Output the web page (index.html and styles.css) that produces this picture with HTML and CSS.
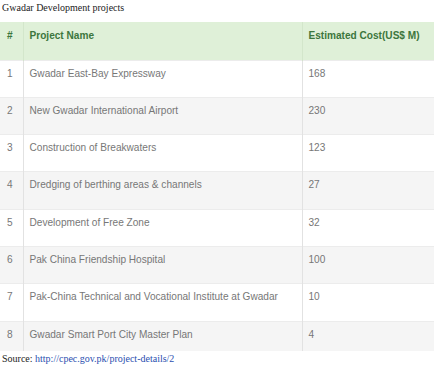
FILE: index.html
```html
<!DOCTYPE html>
<html>
<head>
<meta charset="utf-8">
<link rel="stylesheet" href="styles.css">
</head>
<body>
<p class="caption">Gwadar Development projects</p>
<table class="projects">
  <thead>
    <tr class="head-row">
      <th class="col-num">#</th>
      <th class="col-name">Project Name</th>
      <th class="col-cost">Estimated Cost(US$ M)</th>
    </tr>
  </thead>
  <tbody>
    <tr class="odd"><td>1</td><td>Gwadar East-Bay Expressway</td><td>168</td></tr>
    <tr class="even"><td>2</td><td>New Gwadar International Airport</td><td>230</td></tr>
    <tr class="odd"><td>3</td><td>Construction of Breakwaters</td><td>123</td></tr>
    <tr class="even"><td>4</td><td>Dredging of berthing areas &amp; channels</td><td>27</td></tr>
    <tr class="odd"><td>5</td><td>Development of Free Zone</td><td>32</td></tr>
    <tr class="even"><td>6</td><td>Pak China Friendship Hospital</td><td>100</td></tr>
    <tr class="odd"><td>7</td><td>Pak-China Technical and Vocational Institute at Gwadar</td><td>10</td></tr>
    <tr class="even last"><td>8</td><td>Gwadar Smart Port City Master Plan</td><td>4</td></tr>
  </tbody>
</table>
<p class="source">Source: <a class="src-link" href="#">http://cpec.gov.pk/project-details/2</a></p>
</body>
</html>
```
FILE: styles.css
```css
html, body {
  margin: 0;
  padding: 0;
  background: #ffffff;
}
.caption {
  margin: 0;
  padding: 2px 0 0 2px;
  height: 22px;
  box-sizing: border-box;
  font-family: "Liberation Serif", "Times New Roman", serif;
  font-size: 10px;
  line-height: 11px;
  color: #222;
}
.projects {
  width: 434px;
  border-collapse: collapse;
  table-layout: fixed;
  font-family: "Liberation Sans", Arial, sans-serif;
  font-size: 10.1px;
  line-height: 13px;
  color: #777;
}
.projects th, .projects td {
  box-sizing: border-box;
  text-align: left;
  vertical-align: top;
  padding: 6px 6px 0 6px;
  border-left: 1px solid #e2e2e2;
  border-top: 1px solid #ececec;
  white-space: nowrap;
  overflow: hidden;
}
.col-num { width: 23px; }
.col-cost { width: 132px; }
.projects tr > :first-child {
  border-left: none;
  padding-left: 7px;
}
.head-row {
  height: 38px;
  background: #dff0d8;
}
.projects th {
  color: #3c763d;
  font-weight: bold;
  padding-top: 7px;
  border-top: none;
  border-left-color: #d3e6cb;
}
.projects tbody tr {
  height: 37.3px;
}
.projects tbody tr.last {
  height: 30px;
}
.odd { background: #ffffff; }
.even { background: #f5f5f5; }
.source {
  margin: 0;
  padding: 2px 0 0 2px;
  font-family: "Liberation Serif", "Times New Roman", serif;
  font-size: 10px;
  line-height: 12px;
  color: #222;
}
.src-link {
  color: #2a4fb0;
  text-decoration: none;
}
```
